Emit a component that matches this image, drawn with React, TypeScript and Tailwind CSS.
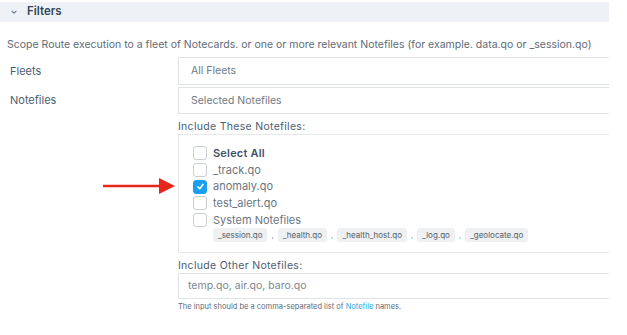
import React from 'react'

const notefiles = [
    { name: '_track.qo', checked: false },
    { name: 'anomaly.qo', checked: true },
    { name: 'test_alert.qo', checked: false },
]

const systemFiles = ['_session.qo', '_health.qo', '_health_host.qo', '_log.qo', '_geolocate.qo']

const Box = ({ checked }: { checked?: boolean }) => (
    <span className={`w-[14px] h-[14px] rounded-[3px] flex items-center justify-center shrink-0 ${checked ? 'bg-[#1a9ff0] border border-[#1a9ff0]' : 'bg-white border border-[#c9ced4]'}`}>
        {checked && (
            <svg viewBox="0 0 12 12" className="w-[9px] h-[9px]" fill="none" stroke="white" strokeWidth="2" strokeLinecap="round" strokeLinejoin="round">
                <path d="M2.5 6.5 5 9l4.5-6" />
            </svg>
        )}
    </span>
)

const App = () => {
    return (
        <div className="w-[627px] h-[335px] bg-white overflow-hidden font-['Inter',sans-serif] text-[#4b5c6c]">
            <div className="w-[609px] overflow-hidden">
                {/* Header */}
                <div className="h-[20px] mt-[2px] bg-[#eef2f7] flex items-center pl-[10px]">
                    <svg viewBox="0 0 10 10" className="w-[8px] h-[8px]" fill="none" stroke="#6b7c8d" strokeWidth="1.4">
                        <path d="M2 3.5 5 6.5 8 3.5" />
                    </svg>
                    <span className="ml-[9px] text-[11.5px] font-semibold text-[#33475b]">Filters</span>
                </div>

                <p className="mt-[16px] pl-[7px] text-[10.5px] text-[#5f6b77] whitespace-nowrap leading-[14px]">
                    Scope Route execution to a fleet of Notecards. or one or more relevant Notefiles (for example. data.qo or _session.qo)
                </p>

                {/* Fleets / Notefiles */}
                <div className="mt-[5px] flex items-center h-[28px]">
                    <div className="w-[178px] pl-[10px] text-[11px] text-[#4a5d70]">Fleets</div>
                    <div className="flex-1 h-full border border-[#dfe3e7] border-r-0 flex items-center pl-[12px] text-[10.5px] text-[#6f7a85]">All Fleets</div>
                </div>
                <div className="mt-[2px] flex items-center h-[27px]">
                    <div className="w-[178px] pl-[10px] text-[11px] text-[#4a5d70]">Notefiles</div>
                    <div className="flex-1 h-full border border-[#dfe3e7] border-r-0 flex items-center pl-[12px] text-[10.5px] text-[#6f7a85]">Selected Notefiles</div>
                </div>

                <div className="ml-[178px]">
                    <div className="mt-[6px] text-[10.5px] text-[#4a5d70] tracking-[0.3px] leading-[13px]">Include These Notefiles:</div>
                    <div className="mt-[1px] h-[119px] border border-[#e6e9ec] border-r-0 pl-[14px] pt-[11px]">
                        <div className="flex flex-col gap-[2.75px] text-[11px] text-[#6b7580]">
                            <label className="flex items-center gap-[6px] h-[14px]">
                                <Box />
                                <span className="font-semibold text-[#3f5266] tracking-[0.2px]">Select All</span>
                            </label>
                            {notefiles.map((n) => (
                                <label key={n.name} className="flex items-center gap-[6px] h-[14px]">
                                    <Box checked={n.checked} />
                                    <span>{n.name}</span>
                                </label>
                            ))}
                            <label className="flex items-center gap-[6px] h-[14px]">
                                <Box />
                                <span>System Notefiles</span>
                            </label>
                        </div>
                        <div className="ml-[20px] mt-[1px] flex items-center text-[8px] text-[#55606b]">
                            {systemFiles.map((f, i) => (
                                <React.Fragment key={f}>
                                    {i > 0 && <span className="mx-[4px] text-[#8a949d]">,</span>}
                                    <span className="bg-[#eef0f2] rounded-[3px] px-[5px] h-[14px] flex items-center">{f}</span>
                                </React.Fragment>
                            ))}
                        </div>
                    </div>

                    <div className="mt-[6px] text-[10.5px] text-[#4a5d70] tracking-[0.3px] leading-[13px]">Include Other Notefiles:</div>
                    <div className="mt-[1px] h-[26px] border border-[#dfe3e7] border-r-0 flex items-center pl-[9px] text-[10.5px] text-[#7d868f]">temp.qo, air.qo, baro.qo</div>
                    <div className="mt-[2px] text-[7.5px] leading-[11px] text-[#5f6a74]">
                        The input should be a comma-separated list of <span className="text-[#2aa7df]">Notefile</span> names.
                    </div>
                </div>
            </div>

            {/* Annotation arrow */}
            <svg className="absolute left-[103px] top-[177px]" width="74" height="18" viewBox="0 0 74 18">
                <line x1="0" y1="9" x2="58" y2="9" stroke="#e8261c" strokeWidth="2.5" />
                <polygon points="56,1 72,9 56,17" fill="#e8261c" />
            </svg>
        </div>
    )
}

export default App
